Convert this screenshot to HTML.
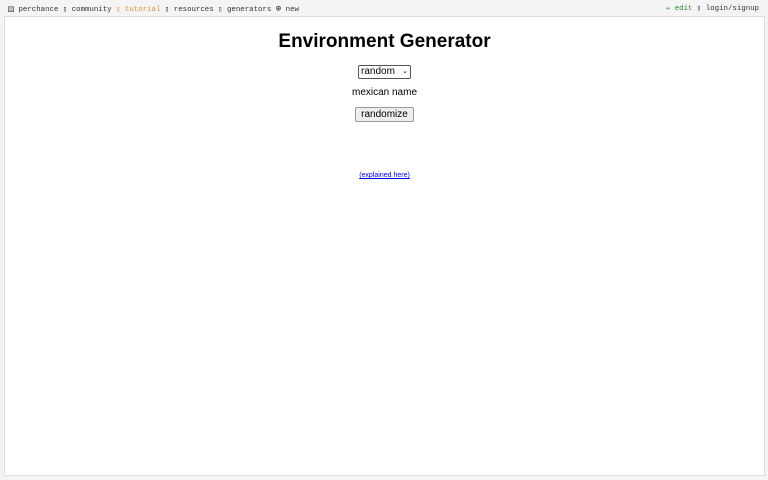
<!DOCTYPE html>
<html><head><style>
body{margin:0;width:768px;height:480px;background:#f4f4f4;position:relative;font-family:"Liberation Sans",sans-serif;overflow:hidden}
.nav{position:absolute;top:3px;font-family:"Liberation Mono",monospace;font-size:7.4px;color:#333;white-space:nowrap}
.main{position:absolute;left:4px;top:16px;width:759px;height:458px;background:#fff;border:1px solid #ddd;text-align:center}
h1{font-size:19px;margin:14px 0 0;font-weight:bold}
.sel{display:inline-block;margin-top:12px;border:1px solid #555;font-size:10px;padding:0 2px;width:47px;text-align:left;height:12px;line-height:12px;border-radius:2px}
.t{font-size:10px;margin-top:8px}
.btn{display:inline-block;margin-top:9px;border:1px solid #999;background:#eee;font-size:10px;padding:1px 5px;border-radius:2px}
a{font-size:7px;color:#00e;display:inline-block;margin-top:50px}
</style></head><body>
<div class="nav" style="left:8px"><span style="font-size:10px;position:relative;top:1px">⚄</span> perchance ▯ community <span style="color:#e88a3a">▯ tutorial</span> ▯ resources ▯ generators <span style="font-size:9px">⊕</span> new</div>
<div class="nav" style="right:9px"><span style="color:#2a8a2a">✏ edit</span> ▯ login/signup</div>
<div class="main">
<h1>Environment Generator</h1>
<div class="sel">random <span style="float:right;font-size:7px">⌄</span></div>
<div class="t">mexican name</div>
<div class="btn">randomize</div><br>
<a href="#">(explained here)</a>
</div>
</body></html>
